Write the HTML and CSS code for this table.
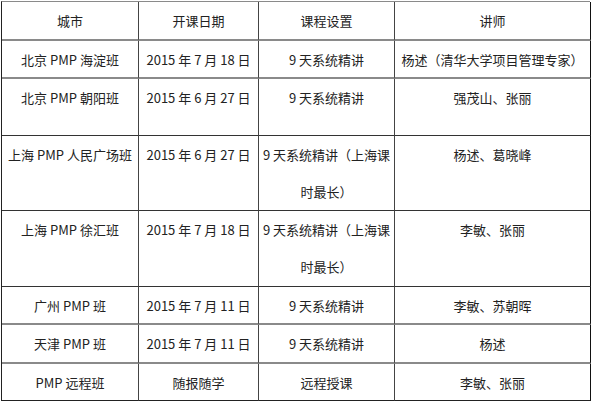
FILE: index.html
```html
<!DOCTYPE html>
<html lang="zh-CN">
<head>
<meta charset="utf-8">
<title>PMP 开课安排</title>
<link rel="stylesheet" href="styles.css">
</head>
<body>
<div class="schedule">
  <div class="cell r-head">城市</div>
  <div class="cell r-head">开课日期</div>
  <div class="cell r-head">课程设置</div>
  <div class="cell r-head last">讲师</div>

  <div class="cell r-thick">北京 PMP 海淀班</div>
  <div class="cell r-thick">2015 年 7 月 18 日</div>
  <div class="cell r-thick">9 天系统精讲</div>
  <div class="cell r-thick last">杨述（清华大学项目管理专家）</div>

  <div class="cell r-thin">北京 PMP 朝阳班</div>
  <div class="cell r-thin">2015 年 6 月 27 日</div>
  <div class="cell r-thin">9 天系统精讲</div>
  <div class="cell r-thin last">强茂山、张丽</div>

  <div class="cell r-thin">上海 PMP 人民广场班</div>
  <div class="cell r-thin">2015 年 6 月 27 日</div>
  <div class="cell r-thin">9 天系统精讲（上海课时最长）</div>
  <div class="cell r-thin last">杨述、葛晓峰</div>

  <div class="cell r-thin">上海 PMP 徐汇班</div>
  <div class="cell r-thin">2015 年 7 月 18 日</div>
  <div class="cell r-thin">9 天系统精讲（上海课时最长）</div>
  <div class="cell r-thin last">李敏、张丽</div>

  <div class="cell r-thick">广州 PMP 班</div>
  <div class="cell r-thick">2015 年 7 月 11 日</div>
  <div class="cell r-thick">9 天系统精讲</div>
  <div class="cell r-thick last">李敏、苏朝晖</div>

  <div class="cell r-thick">天津 PMP 班</div>
  <div class="cell r-thick">2015 年 7 月 11 日</div>
  <div class="cell r-thick">9 天系统精讲</div>
  <div class="cell r-thick last">杨述</div>

  <div class="cell r-end">PMP 远程班</div>
  <div class="cell r-end">随报随学</div>
  <div class="cell r-end">远程授课</div>
  <div class="cell r-end last">李敏、张丽</div>
</div>
</body>
</html>
```
FILE: styles.css
```css
html, body {
  margin: 0;
  padding: 0;
  background: #fff;
}

body {
  font-family: "Noto Sans CJK SC", "Noto Sans", sans-serif;
  font-size: 13px;
  color: #222;
}

.schedule {
  margin: 1px 0 0 1px;
  width: 589px;
  display: grid;
  grid-template-columns: 137px 120px 136px 196px;
  grid-template-rows: 39px 38px 57px 75px 76px 38px 39px 37px;
  border-top: 1px solid #8a8a8a;
  border-left: 1px solid #222;
  box-sizing: border-box;
}

.cell {
  box-sizing: border-box;
  border-right: 1px solid #444;
  padding: 0 2px;
  line-height: 37px;
  text-align: center;
  overflow: hidden;
}

.cell.last {
  border-right: 1px solid #111;
}

.r-head,
.r-thick {
  border-bottom: 2px solid #8a8a8a;
}

.r-thin {
  border-bottom: 1px solid #333;
}

.r-end {
  border-bottom: 1px solid #222;
}
```
